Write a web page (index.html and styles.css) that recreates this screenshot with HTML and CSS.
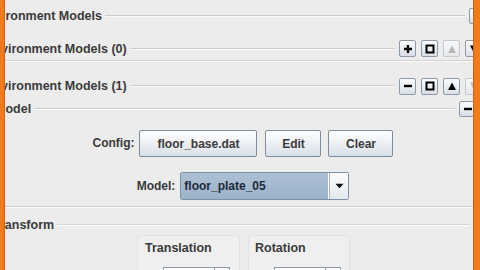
FILE: index.html
```html
<!DOCTYPE html>
<html>
<head>
<meta charset="utf-8">
<link rel="stylesheet" href="styles.css">
</head>
<body>
<div class="screen">
  <div class="bar bar-left"></div>
  <div class="main">
    <div class="row r1">
      <span class="title">Environment Models</span>
      <span class="rule"></span>
      <div class="tools">
        <button class="tb"><svg viewBox="0 0 10 10" width="10" height="10"><path d="M1 5H9" stroke="#000" stroke-width="2.4"/></svg></button>
      </div>
    </div>
    <div class="row r2">
      <span class="title">Environment Models (0)</span>
      <span class="rule"></span>
      <div class="tools">
        <button class="tb"><svg viewBox="0 0 10 10" width="10" height="10"><path d="M1 5H9M5 1V9" stroke="#000" stroke-width="2.4"/></svg></button>
        <button class="tb"><svg viewBox="0 0 10 10" width="10" height="10"><rect x="1.5" y="1.5" width="7" height="7" fill="none" stroke="#000" stroke-width="2"/></svg></button>
        <button class="tb off"><svg viewBox="0 0 10 10" width="10" height="10"><path d="M1 9L5 1.5L9 9Z" fill="#b9b9b9"/></svg></button>
        <button class="tb"><svg viewBox="0 0 10 10" width="10" height="10"><path d="M1 1.5L5 9L9 1.5Z" fill="#000"/></svg></button>
      </div>
    </div>
    <div class="row r3">
      <span class="title">Environment Models (1)</span>
      <span class="rule"></span>
      <div class="tools">
        <button class="tb"><svg viewBox="0 0 10 10" width="10" height="10"><path d="M1 5H9" stroke="#000" stroke-width="2.4"/></svg></button>
        <button class="tb"><svg viewBox="0 0 10 10" width="10" height="10"><rect x="1.5" y="1.5" width="7" height="7" fill="none" stroke="#000" stroke-width="2"/></svg></button>
        <button class="tb"><svg viewBox="0 0 10 10" width="10" height="10"><path d="M1 9L5 1.5L9 9Z" fill="#000"/></svg></button>
        <button class="tb off"><svg viewBox="0 0 10 10" width="10" height="10"><path d="M1 1.5L5 9L9 1.5Z" fill="#b9b9b9"/></svg></button>
      </div>
    </div>
    <div class="row r4">
      <span class="title">Model</span>
      <span class="rule"></span>
      <div class="tools">
        <button class="tb"><svg viewBox="0 0 10 10" width="10" height="10"><path d="M1 5H9" stroke="#000" stroke-width="2.4"/></svg></button>
      </div>
    </div>
    <div class="form-row config">
      <span class="lbl">Config:</span>
      <button class="btn b-file">floor_base.dat</button>
      <button class="btn b-edit">Edit</button>
      <button class="btn b-clear">Clear</button>
    </div>
    <div class="form-row model">
      <span class="lbl">Model:</span>
      <div class="combo">
        <span class="combo-val">floor_plate_05</span>
        <span class="combo-arrow"><svg viewBox="0 0 10 6" width="9" height="6"><path d="M0.5 0.5H9.5L5 5.5Z" fill="#111"/></svg></span>
      </div>
    </div>
    <div class="row r5">
      <span class="title">Transform</span>
      <span class="rule"></span>
    </div>
    <div class="panels">
      <div class="panel p-trans">
        <div class="ptitle">Translation</div>
        <div class="field-row">
          <span class="fl">X:</span>
          <span class="tf"></span>
          <span class="spin"></span>
        </div>
      </div>
      <div class="panel p-rot">
        <div class="ptitle">Rotation</div>
        <div class="field-row">
          <span class="fl">X:</span>
          <span class="tf"></span>
          <span class="spin"></span>
        </div>
      </div>
    </div>
  </div>
  <div class="bar bar-right"></div>
</div>
</body>
</html>
```
FILE: styles.css
```css
* { box-sizing: border-box; }
html, body { margin: 0; padding: 0; }
body {
  width: 480px;
  height: 270px;
  overflow: hidden;
  background: #ebebeb;
  font-family: "Liberation Sans", Arial, sans-serif;
  font-weight: bold;
  font-size: 12px;
  color: #3a3a3a;
}
.screen {
  display: flex;
  width: 480px;
  height: 270px;
}
.bar { flex: none; height: 270px; }
.bar-left {
  width: 5px;
  background: #f27a1e;
  border-right: 1px solid #d9600c;
}
.bar-right {
  width: 7px;
  background: #f27a1e;
  border-left: 1px solid #d9600c;
}
.main {
  flex: 1;
  min-width: 0;
  overflow: hidden;
  background: #ececec;
  display: flex;
  flex-direction: column;
}
.row {
  display: flex;
  align-items: center;
  flex: none;
}
.title {
  white-space: nowrap;
  line-height: 14px;
  font-size: 12.5px;
  flex: none;
}
.rule {
  flex: 1;
  height: 2px;
  border-top: 1px solid #cdcdcd;
  border-bottom: 1px solid #fafafa;
  margin: 0 4px 0 3px;
}
.tools {
  display: flex;
  gap: 5px;
  flex: none;
}
.tb {
  width: 17px;
  height: 17px;
  padding: 0;
  margin: 0;
  border: 1px solid #8e9aa7;
  border-radius: 2px;
  background: linear-gradient(#fbfcfd, #e9edf1 55%, #d7dee6);
  display: flex;
  align-items: center;
  justify-content: center;
}
.tb.off {
  border-color: #c3c9cf;
  background: linear-gradient(#f7f8f9, #e6e9ec);
}
.r1 {
  height: 32px;
  margin-left: -26px;
  margin-right: -13px;
}
.r1 .tb { height: 16px; }
.r2 {
  height: 29px;
  padding-top: 5px;
  margin-left: -20px;
  margin-right: -9px;
  border-bottom: 1px solid #d3d3d3;
  box-shadow: 0 1px 0 #f8f8f8;
}
.r3 {
  height: 37px;
  padding-top: 13px;
  margin-left: -20px;
  margin-right: -9px;
}
.r4 {
  height: 22px;
  margin-left: -10px;
  margin-right: -3px;
}
.r4 .tb { height: 16px; }
.form-row {
  display: flex;
  align-items: center;
  justify-content: center;
  padding-left: 8px;
  flex: none;
}
.config {
  height: 44px;
  padding-top: 10px;
  align-items: flex-start;
}
.model {
  height: 43px;
  padding-top: 8px;
  align-items: flex-start;
  border-bottom: 1px solid #cfcfcf;
  box-shadow: 0 1px 0 #f9f9f9;
}
.lbl {
  margin-right: 5px;
  line-height: 27px;
}
.model .lbl { line-height: 28px; }
.btn {
  height: 27px;
  padding: 0;
  margin: 0;
  border: 1px solid #7d8d9d;
  border-radius: 2px;
  background: linear-gradient(#fefefe, #eef1f4 45%, #d8e0e8);
  font-family: "Liberation Sans", Arial, sans-serif;
  font-weight: bold;
  font-size: 12px;
  color: #3a3a3a;
}
.b-file { width: 118px; }
.b-edit { width: 56px; margin-left: 8px; }
.b-clear { width: 65px; margin-left: 7px; }
.combo {
  width: 169px;
  height: 28px;
  display: flex;
  border: 1px solid #7f92a5;
  border-radius: 2px;
  background: #fff;
}
.combo-val {
  flex: 1;
  background: linear-gradient(#adc0d5, #9db2ca);
  color: #1e2a36;
  padding-left: 3px;
  line-height: 26px;
  margin: 0 1px 0 0;
}
.combo-arrow {
  width: 19px;
  display: flex;
  align-items: center;
  justify-content: center;
  border-left: 1px solid #a5b3c1;
  background: linear-gradient(#fdfdfd, #e3e8ed);
}
.r5 {
  height: 28px;
  padding-top: 8px;
  margin-left: -12px;
}
.r5 .rule {
  border-top-color: #d6d6d6;
  margin-right: 3px;
}
.panels {
  display: flex;
  gap: 8px;
  padding-left: 132px;
  flex: none;
}
.panel {
  height: 50px;
  background: #efefef;
  border: 1px solid #e3e3e3;
  border-radius: 3px;
  padding: 5px 0 0 6px;
}
.p-trans { width: 103px; }
.p-rot { width: 102px; }
.p-rot .ptitle { padding-left: 0; }
.ptitle {
  line-height: 14px;
  font-size: 12.5px;
  padding-left: 1px;
}
.field-row {
  display: flex;
  align-items: flex-start;
  margin-top: 12px;
}
.fl {
  width: 19px;
  padding-left: 4px;
  line-height: 18px;
  margin-top: 3px;
  color: #555;
}
.tf {
  width: 52px;
  height: 20px;
  background: #fff;
  border: 1px solid #8c99a6;
}
.spin {
  width: 15px;
  height: 20px;
  border: 1px solid #8c99a6;
  border-left: none;
  background: linear-gradient(#fcfcfc, #e2e7ec);
}
```
